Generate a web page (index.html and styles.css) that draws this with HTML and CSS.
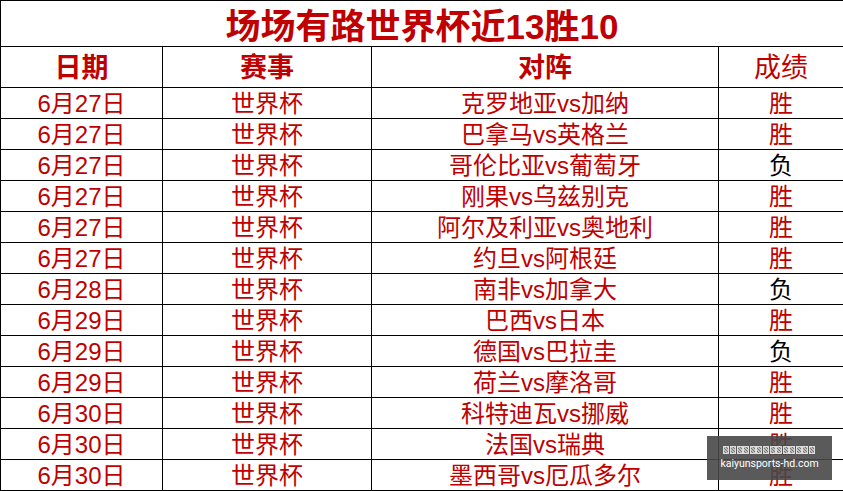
FILE: index.html
```html
<!DOCTYPE html>
<html lang="zh-CN">
<head>
<meta charset="utf-8">
<title>场场有路世界杯近13胜10</title>
<link rel="stylesheet" href="styles.css">
</head>
<body>
<div class="page">
<table class="sheet">
  <colgroup>
    <col class="c-date"><col class="c-comp"><col class="c-match"><col class="c-res">
  </colgroup>
  <tr class="title-row"><td colspan="4" class="title">场场有路世界杯近13胜10</td></tr>
  <tr class="head-row">
    <td class="head bold">日期</td>
    <td class="head bold">赛事</td>
    <td class="head bold">对阵</td>
    <td class="head">成绩</td>
  </tr>
  <tr><td>6月27日</td><td>世界杯</td><td>克罗地亚vs加纳</td><td>胜</td></tr>
  <tr><td>6月27日</td><td>世界杯</td><td>巴拿马vs英格兰</td><td>胜</td></tr>
  <tr><td>6月27日</td><td>世界杯</td><td>哥伦比亚vs葡萄牙</td><td class="lose">负</td></tr>
  <tr><td>6月27日</td><td>世界杯</td><td>刚果vs乌兹别克</td><td>胜</td></tr>
  <tr><td>6月27日</td><td>世界杯</td><td>阿尔及利亚vs奥地利</td><td>胜</td></tr>
  <tr><td>6月27日</td><td>世界杯</td><td>约旦vs阿根廷</td><td>胜</td></tr>
  <tr><td>6月28日</td><td>世界杯</td><td>南非vs加拿大</td><td class="lose">负</td></tr>
  <tr><td>6月29日</td><td>世界杯</td><td>巴西vs日本</td><td>胜</td></tr>
  <tr><td>6月29日</td><td>世界杯</td><td>德国vs巴拉圭</td><td class="lose">负</td></tr>
  <tr><td>6月29日</td><td>世界杯</td><td>荷兰vs摩洛哥</td><td>胜</td></tr>
  <tr><td>6月30日</td><td>世界杯</td><td>科特迪瓦vs挪威</td><td>胜</td></tr>
  <tr><td>6月30日</td><td>世界杯</td><td>法国vs瑞典</td><td>胜</td></tr>
  <tr><td>6月30日</td><td>世界杯</td><td>墨西哥vs厄瓜多尔</td><td>胜</td></tr>
</table>
<div class="watermark">
  <div class="tofu"><span></span><span></span><span></span><span></span><span></span><span></span><span></span><span></span><span></span><span></span><span></span><span></span><span></span><span></span></div>
  <div class="wm-url">kaiyunsports-hd.com</div>
</div>
</div>
</body>
</html>
```
FILE: styles.css
```css
html, body {
  margin: 0;
  padding: 0;
  background: #fff;
}
.page {
  position: relative;
  width: 843px;
  height: 491px;
  overflow: hidden;
}
.sheet {
  border-collapse: collapse;
  table-layout: fixed;
  width: 843px;
  font-family: "Liberation Sans", "Noto Sans CJK SC", sans-serif;
  color: #c00000;
}
.c-date { width: 162px; }
.c-comp { width: 209px; }
.c-match { width: 347px; }
.c-res { width: 125px; }
.sheet td {
  border: 1.5px solid #000;
  padding: 2px 0 0;
  height: 28px;
  line-height: 28px;
  text-align: center;
  font-size: 24px;
  white-space: nowrap;
  overflow: hidden;
}
.sheet .title-row td {
  padding-top: 6px;
  height: 39px;
  line-height: 39px;
  font-size: 35px;
  font-weight: bold;
}
.sheet .head-row td {
  padding-top: 3px;
  height: 37px;
  line-height: 37px;
  font-size: 27px;
}
.bold { font-weight: bold; }
.sheet td.lose { color: #000; }
.watermark {
  position: absolute;
  left: 707px;
  top: 436px;
  width: 125px;
  height: 44px;
  background: rgba(72, 72, 72, 0.9);
  display: flex;
  flex-direction: column;
  align-items: center;
  justify-content: center;
  gap: 3px;
}
.tofu {
  display: flex;
  height: 8px;
}
.tofu span {
  width: 4px;
  height: 6px;
  border: 0.5px solid #ddd;
  background: repeating-linear-gradient(45deg, #bbb 0 1px, #777 1px 2px);
  margin-right: 0.6px;
}
.wm-url {
  font-family: "Roboto", "Liberation Sans", sans-serif;
  font-size: 10.5px;
  line-height: 13px;
  color: #fff;
}
```
